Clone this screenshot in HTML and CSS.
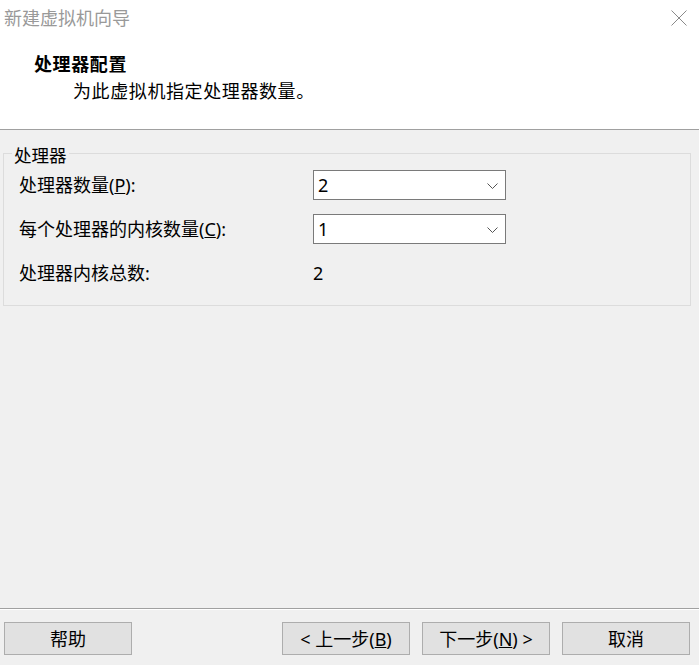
FILE: index.html
```html
<!DOCTYPE html>
<html lang="zh-CN">
<head>
<meta charset="utf-8">
<title>新建虚拟机向导</title>
<link rel="stylesheet" href="styles.css">
</head>
<body>
<div class="window">
  <div class="header">
    <div class="titlebar">
      <div class="title">新建虚拟机向导</div>
      <svg class="close" width="16" height="16" viewBox="0 0 16 16"><path d="M0.5 0.5 L15.5 15.5 M15.5 0.5 L0.5 15.5" stroke="#8a8a8a" stroke-width="1" fill="none"/></svg>
    </div>
    <div class="heading">处理器配置</div>
    <div class="sub">为此虚拟机指定处理器数量。</div>
  </div>
  <div class="main">
    <div class="group">
      <div class="legend">处理器</div>
      <div class="grid">
        <div class="label">处理器数量(<u>P</u>):</div>
        <div class="combo"><span class="val">2</span><svg class="chev" width="11" height="6" viewBox="0 0 11 6"><path d="M0.5 0.5 L5.5 5.5 L10.5 0.5" stroke="#555" stroke-width="1" fill="none"/></svg></div>
        <div class="label">每个处理器的内核数量(<u>C</u>):</div>
        <div class="combo"><span class="val">1</span><svg class="chev" width="11" height="6" viewBox="0 0 11 6"><path d="M0.5 0.5 L5.5 5.5 L10.5 0.5" stroke="#555" stroke-width="1" fill="none"/></svg></div>
        <div class="label">处理器内核总数:</div>
        <div class="total">2</div>
      </div>
    </div>
  </div>
  <div class="footer">
    <button class="btn">帮助</button>
    <div class="spacer"></div>
    <div class="navbtns">
      <button class="btn">&lt; 上一步(<u>B</u>)</button>
      <button class="btn">下一步(<u>N</u>) &gt;</button>
      <button class="btn">取消</button>
    </div>
  </div>
</div>
</body>
</html>
```
FILE: styles.css
```css
* { box-sizing: border-box; }
html, body { margin: 0; padding: 0; }
body {
  background: #f0f0f0;
  font-family: "Noto Sans", "Noto Sans CJK SC", sans-serif;
  font-size: 18px;
  color: #000;
}
.window {
  width: 699px;
  height: 665px;
  display: flex;
  flex-direction: column;
}
.header {
  background: #fff;
  height: 130px;
  border-bottom: 1px solid #a0a0a0;
  flex: none;
}
.titlebar {
  height: 34px;
  display: flex;
  justify-content: space-between;
  align-items: flex-start;
  padding: 8px 12px 0 4px;
}
.title {
  color: #999;
  line-height: 18px;
  font-family: "Noto Sans CJK SC", sans-serif;
}
.close { margin-top: 2px; display: block; }
.heading {
  margin-top: 20px;
  padding-left: 34px;
  line-height: 18px;
  font-weight: bold;
  letter-spacing: 0.6px;
  font-family: "Noto Sans CJK SC", sans-serif;
}
.sub {
  margin-top: 9px;
  padding-left: 73px;
  line-height: 18px;
  letter-spacing: 0.6px;
  font-family: "Noto Sans CJK SC", sans-serif;
}
.main { flex: 1; }
.group {
  position: relative;
  margin: 23px 0 0 3px;
  width: 688px;
  height: 153px;
  border: 1px solid #dcdcdc;
  padding: 16px 0 0 15px;
}
.legend {
  position: absolute;
  left: 8px;
  top: -7px;
  line-height: 16px;
  padding: 0 2px;
  background: #f0f0f0;
  font-size: 17.5px;
}
.grid {
  display: grid;
  grid-template-columns: 294px 193px;
  grid-auto-rows: 30px;
  row-gap: 14px;
  align-items: center;
}
.label { line-height: 20px; }
.combo {
  height: 30px;
  background: #fff;
  border: 1px solid #7a7a7a;
  display: flex;
  align-items: center;
  justify-content: space-between;
  padding: 0 7px 0 4px;
}
.val { line-height: 20px; }
.chev { display: block; margin-top: 1px; }
.total { line-height: 20px; }
.footer {
  flex: none;
  height: 57px;
  border-top: 1px solid #a0a0a0;
  box-shadow: inset 0 1px 0 #fff;
  display: flex;
  align-items: flex-start;
  padding: 13px 9px 0 4px;
}
.spacer { flex: 1; }
.navbtns { display: flex; gap: 12px; }
.btn {
  width: 128px;
  height: 33px;
  background: #e1e1e1;
  border: 1px solid #adadad;
  font-family: "Noto Sans", "Noto Sans CJK SC", sans-serif;
  font-size: 18px;
  color: #000;
  padding: 0;
  line-height: 20px;
}
```
